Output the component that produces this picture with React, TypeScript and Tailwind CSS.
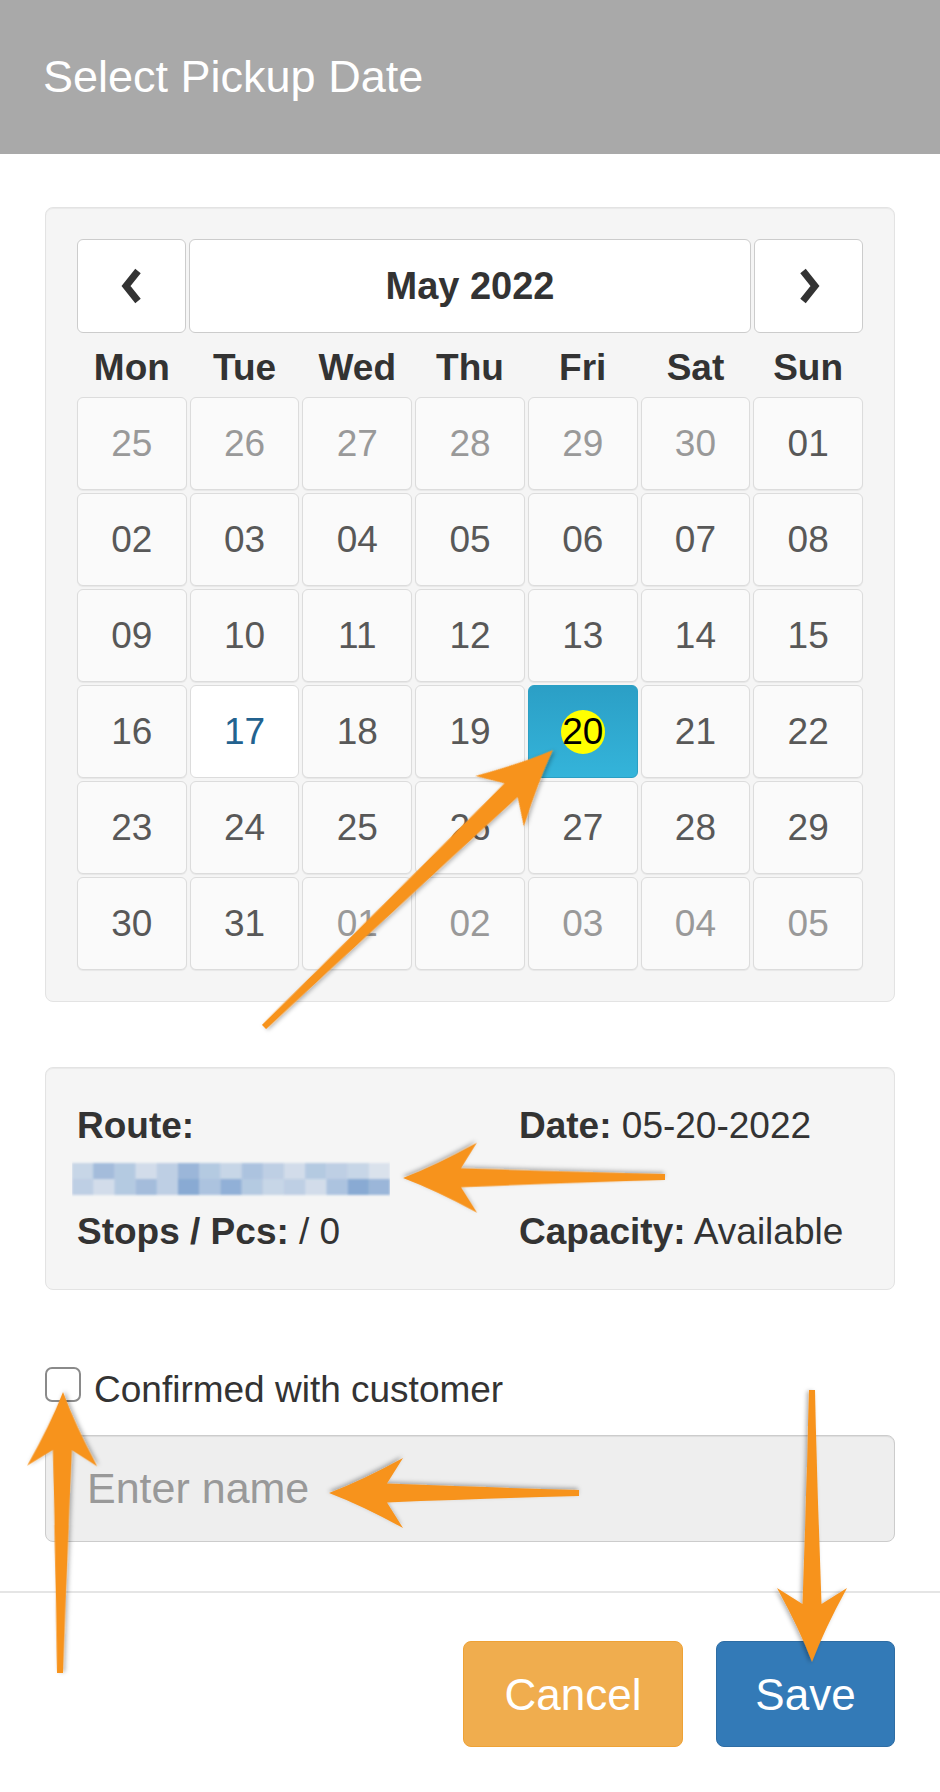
import React from "react";

type Day = { d: string; muted?: boolean; today?: boolean; active?: boolean };

const weeks: Day[][] = [
  [{ d: "25", muted: true }, { d: "26", muted: true }, { d: "27", muted: true }, { d: "28", muted: true }, { d: "29", muted: true }, { d: "30", muted: true }, { d: "01" }],
  [{ d: "02" }, { d: "03" }, { d: "04" }, { d: "05" }, { d: "06" }, { d: "07" }, { d: "08" }],
  [{ d: "09" }, { d: "10" }, { d: "11" }, { d: "12" }, { d: "13" }, { d: "14" }, { d: "15" }],
  [{ d: "16" }, { d: "17", today: true }, { d: "18" }, { d: "19" }, { d: "20", active: true }, { d: "21" }, { d: "22" }],
  [{ d: "23" }, { d: "24" }, { d: "25" }, { d: "26" }, { d: "27" }, { d: "28" }, { d: "29" }],
  [{ d: "30" }, { d: "31" }, { d: "01", muted: true }, { d: "02", muted: true }, { d: "03", muted: true }, { d: "04", muted: true }, { d: "05", muted: true }],
];

const weekdays = ["Mon", "Tue", "Wed", "Thu", "Fri", "Sat", "Sun"];

// annotation arrows: tail -> tip
const arrows = [
  { x1: 264, y1: 1027, x2: 553, y2: 750 },
  { x1: 665, y1: 1177, x2: 403, y2: 1178 },
  { x1: 60, y1: 1673, x2: 63, y2: 1392 },
  { x1: 579, y1: 1493, x2: 329, y2: 1493 },
  { x1: 812, y1: 1390, x2: 812, y2: 1662 },
];

function arrowPath(len: number) {
  const L = 72;
  const W = 35;
  const n = len - L;
  return `M0,-3 Q${n * 0.5},-5.5 ${n + 14},-9.5 L${n - 2},-${W} Q${len - L * 0.45},-${W * 0.35} ${len},0 Q${len - L * 0.45},${W * 0.35} ${n - 2},${W} L${n + 14},9.5 Q${n * 0.5},5.5 0,3 Z`;
}

const blurTop = [0.25, 0.45, 0.35, 0.2, 0.3, 0.5, 0.35, 0.25, 0.4, 0.3, 0.2, 0.35, 0.3, 0.25, 0.15];
const blurBottom = [0.3, 0.2, 0.35, 0.45, 0.3, 0.6, 0.4, 0.55, 0.35, 0.25, 0.3, 0.2, 0.4, 0.6, 0.5];

function BlurredRoute() {
  return (
    <svg width="318" height="36" className="block -ml-[5px]">
      <defs>
        <filter id="px" x="-5%" y="-20%" width="110%" height="140%">
          <feGaussianBlur stdDeviation="1.2" />
        </filter>
      </defs>
      <g filter="url(#px)">
        {blurTop.map((o, i) => (
          <rect key={`t${i}`} x={i * 21.2} y={2} width={21.2} height={16} fill="#3f78bd" opacity={o} />
        ))}
        {blurBottom.map((o, i) => (
          <rect key={`b${i}`} x={i * 21.2} y={18} width={21.2} height={16} fill="#3f78bd" opacity={o} />
        ))}
      </g>
    </svg>
  );
}

function Chevron({ dir }: { dir: "left" | "right" }) {
  return (
    <svg width="26" height="36" viewBox="0 0 26 36">
      <path
        d={dir === "left" ? "M19,3 L7,18 L19,33" : "M7,3 L19,18 L7,33"}
        fill="none"
        stroke="#333"
        strokeWidth="7"
        strokeLinejoin="miter"
      />
    </svg>
  );
}

function DayCell({ day }: { day: Day }) {
  if (day.active) {
    return (
      <div className="h-[93px] flex items-center justify-center rounded-[6px] border border-[#2a9fc4] bg-linear-to-b from-[#2b9fc6] to-[#34b4da]">
        <span className="w-[44px] h-[44px] rounded-full bg-[#ffff00] flex items-center justify-center text-black text-[37px] leading-none">
          {day.d}
        </span>
      </div>
    );
  }
  if (day.today) {
    return (
      <div className="h-[93px] flex items-center justify-center rounded-[6px] border border-[#dcdcdc] bg-white text-[#23628f]">
        {day.d}
      </div>
    );
  }
  return (
    <div
      className={
        day.muted
          ? "h-[93px] flex items-center justify-center rounded-[6px] border border-[#dcdcdc] bg-[#fafafa] text-[#999] shadow-[0_1px_1px_rgba(0,0,0,0.06)]"
          : "h-[93px] flex items-center justify-center rounded-[6px] border border-[#dcdcdc] bg-[#fafafa] text-[#585858] shadow-[0_1px_1px_rgba(0,0,0,0.06)]"
      }
    >
      {day.d}
    </div>
  );
}

export default function App() {
  return (
    <div className="relative w-[940px] h-[1792px] overflow-hidden bg-white text-[#333] font-['Liberation_Sans',Arial,sans-serif] text-[37px] leading-[53px]">
      {/* header */}
      <div className="h-[154px] bg-[#a9a9a9] flex items-center px-[43px]">
        <h4 className="text-[45px] leading-none text-white pb-[2px]">Select Pickup Date</h4>
      </div>

      <div className="px-[45px] pt-[53px]">
        {/* calendar */}
        <div className="rounded-[8px] border border-[#e3e3e3] bg-[#f5f5f5] p-[31px] shadow-[inset_0_1px_1px_rgba(0,0,0,0.05)]">
          <div className="flex gap-[3px] h-[94px]">
            <button className="w-[109px] flex items-center justify-center rounded-[6px] border border-[#ccc] bg-white">
              <Chevron dir="left" />
            </button>
            <button className="flex-1 flex items-center justify-center rounded-[6px] border border-[#ccc] bg-white font-bold text-[#333] text-[38px]">
              May 2022
            </button>
            <button className="w-[109px] flex items-center justify-center rounded-[6px] border border-[#ccc] bg-white">
              <Chevron dir="right" />
            </button>
          </div>
          <div className="grid grid-cols-7 gap-[3px] h-[64px] pt-[4px] items-center text-center font-bold text-[37px]">
            {weekdays.map((w) => (
              <div key={w}>{w}</div>
            ))}
          </div>
          <div className="grid grid-cols-7 gap-[3px]">
            {weeks.flat().map((day, i) => (
              <DayCell key={i} day={day} />
            ))}
          </div>
        </div>

        {/* route info */}
        <div className="mt-[65px] rounded-[8px] border border-[#e3e3e3] bg-[#f5f5f5] px-[31px] py-[31px] shadow-[inset_0_1px_1px_rgba(0,0,0,0.05)]">
          <div className="grid grid-cols-[442px_1fr]">
            <div className="font-bold">Route:</div>
            <div>
              <span className="font-bold">Date:</span> 05-20-2022
            </div>
            <div className="h-[53px] flex items-center">
              <BlurredRoute />
            </div>
            <div />
            <div>
              <span className="font-bold">Stops / Pcs:</span> / 0
            </div>
            <div>
              <span className="font-bold">Capacity:</span> Available
            </div>
          </div>
        </div>

        {/* confirmation */}
        <label className="mt-[77px] flex items-start gap-[13px]">
          <span className="w-[36px] h-[35px] shrink-0 rounded-[7px] border-2 border-[#8a8a8a] bg-white" />
          <span className="mt-[5px] leading-[35px]">Confirmed with customer</span>
        </label>
        <input
          disabled
          placeholder="Enter name"
          className="mt-[28px] block w-full h-[107px] rounded-[8px] border border-[#ccc] bg-[#eee] px-[41px] text-[43px] placeholder:text-[#999] shadow-[inset_0_1px_1px_rgba(0,0,0,0.075)] font-['Liberation_Sans',Arial,sans-serif]"
        />
      </div>

      <div className="mt-[49px] h-[2px] bg-[#e5e5e5]" />

      {/* footer */}
      <div className="flex justify-end gap-[33px] px-[45px] pt-[48px]">
        <button className="w-[220px] h-[106px] rounded-[8px] border border-[#eea236] bg-[#f0ad4e] text-white text-[44px]">
          Cancel
        </button>
        <button className="w-[179px] h-[106px] rounded-[8px] border border-[#2e6da4] bg-[#337ab7] text-white text-[44px]">
          Save
        </button>
      </div>

      {/* annotation arrows */}
      <svg className="absolute inset-0 pointer-events-none" width="940" height="1792">
        <defs>
          <filter id="shadow" x="-10%" y="-10%" width="120%" height="120%">
            <feDropShadow dx="1" dy="2" stdDeviation="2" floodColor="#000" floodOpacity="0.3" />
          </filter>
        </defs>
        {arrows.map((a, i) => {
          const dx = a.x2 - a.x1;
          const dy = a.y2 - a.y1;
          const len = Math.sqrt(dx * dx + dy * dy);
          const ang = (Math.atan2(dy, dx) * 180) / Math.PI;
          return (
            <g key={i} transform={`translate(${a.x1} ${a.y1}) rotate(${ang})`} filter="url(#shadow)">
              <path d={arrowPath(len)} fill="#f7931e" strokeLinejoin="round" />
            </g>
          );
        })}
      </svg>
    </div>
  );
}
